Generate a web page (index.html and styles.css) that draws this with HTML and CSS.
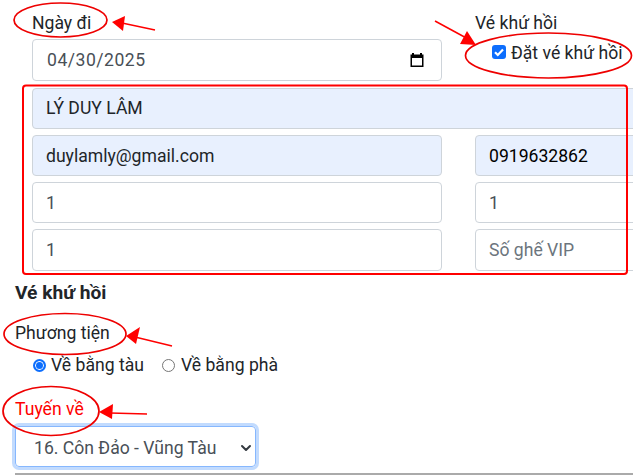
FILE: index.html
```html
<!DOCTYPE html>
<html lang="en">
<head>
    <meta charset="UTF-8">
    <meta name="viewport" content="width=device-width, initial-scale=1.0">
    <title>Đặt vé</title>
    <link rel="stylesheet" href="styles.css">
</head>
<body>

<div class="page">
    <div class="form-grid top-row">
        <div>
            <label class="field-label">Ngày đi</label>
            <div class="input-box">
                <span class="date-text">04/30/2025</span>
                <svg class="calendar" viewBox="0 0 16 16" width="16" height="16">
                    <path d="M3 1h2v1.500h6V1h2v1.500h1.500V15h-13V2.500H3zM3 6v7.500h10V6z" fill="#000" fill-rule="evenodd"/>
                </svg>
            </div>
        </div>
        <div>
            <label class="field-label">Vé khứ hồi</label>
            <div class="check-row">
                <span class="checkbox">
                    <svg viewBox="0 0 14 14" width="14" height="14">
                        <path d="M3 7.200l2.800 2.800L11 4.500" fill="none" stroke="#fff" stroke-width="2.200"/>
                    </svg>
                </span>
                <span class="check-text">Đặt vé khứ hồi</span>
            </div>
        </div>
    </div>

    <div class="input-box autofill full-row name-row">LÝ DUY LÂM</div>

    <div class="form-grid rows">
        <div class="input-box autofill">duylamly@gmail.com</div>
        <div class="input-box autofill dark">0919632862</div>
        <div class="input-box">1</div>
        <div class="input-box">1</div>
        <div class="input-box tall">1</div>
        <div class="input-box tall placeholder">Số ghế VIP</div>
    </div>

    <div class="return-section">
        <h4 class="section-title">Vé khứ hồi</h4>
        <label class="field-label">Phương tiện</label>
        <div class="radio-row">
            <span class="radio-item"><span class="radio checked"></span>Về bằng tàu</span>
            <span class="radio-item"><span class="radio"></span>Về bằng phà</span>
        </div>
        <label class="field-label red">Tuyến về</label>
        <div class="select-box">
            <span>16. Côn Đảo - Vũng Tàu</span>
            <svg viewBox="0 0 12 12" width="12" height="12">
                <path d="M2 4l4 4 4-4" fill="none" stroke="#343a40" stroke-width="2" stroke-linecap="round" stroke-linejoin="round"/>
            </svg>
        </div>
        <div class="bottom-line"></div>
    </div>
</div>

<!-- red notes drawn on top of the screenshot -->
<svg class="notes" viewBox="0 0 633 475" width="633" height="475">
    <g fill="none" stroke="#ee0000" stroke-width="1.700">
        <ellipse cx="60.500" cy="20" rx="46.500" ry="17"/>
        <ellipse cx="548.500" cy="55.500" rx="83" ry="22.500"/>
        <ellipse cx="65" cy="334" rx="61" ry="20.500"/>
        <ellipse cx="51" cy="411" rx="48" ry="24.500"/>
    </g>
    <rect x="23" y="85.500" width="604" height="188.500" rx="3" fill="none" stroke="#f00" stroke-width="2"/>
    <g stroke="#f00" stroke-width="1.500" fill="#f00">
        <line x1="155" y1="30" x2="122" y2="23"/>
        <line x1="435" y1="21" x2="470" y2="40"/>
        <line x1="172" y1="346" x2="135" y2="337"/>
        <line x1="147" y1="414" x2="110" y2="413"/>
    </g>
    <g fill="#f00">
        <polygon points="112,22 125,16 123,31"/>
        <polygon points="476,45 460,44 467,31"/>
        <polygon points="126,336 140,327 136,344"/>
        <polygon points="99,412 113,404 112,419"/>
    </g>
</svg>

</body>
</html>
```

FILE: styles.css
```css
* {
    margin: 0;
    padding: 0;
    box-sizing: border-box;
    font-family: Roboto, Arial, sans-serif;
}

body {
    background-color: #fff;
    color: #212529;
    font-size: 17.600px;
    line-height: 24px;
    overflow: hidden;
    height: 475px;
}

.page {
    position: relative;
    width: 633px;
    height: 475px;
    overflow: hidden;
    padding-top: 11px;
}

.form-grid {
    display: grid;
    grid-template-columns: 410px 300px;
    column-gap: 33px;
    margin-left: 32px;
}

.field-label {
    display: block;
    margin-bottom: 4px;
}

.input-box {
    display: flex;
    align-items: center;
    justify-content: space-between;
    height: 41px;
    padding: 0 13px;
    border: 1px solid #ced4da;
    border-radius: 4px;
    background-color: #fff;
    color: #495057;
}

.top-row .input-box {
    height: 42px;
    padding-right: 16px;
}

.date-text {
    margin-left: 1px;
    letter-spacing: 0.500px;
}

.calendar {
    flex-shrink: 0;
}

.autofill {
    background-color: #e8f0fe;
    color: #212529;
}

.dark {
    color: #000;
}

.full-row {
    width: 700px;
    margin-left: 32px;
}

.name-row {
    margin-top: 7px;
    padding-bottom: 2px;
}

.rows {
    margin-top: 6px;
    row-gap: 6px;
}

.tall {
    height: 42px;
}

.placeholder {
    color: #6c757d;
}

.check-row {
    display: flex;
    align-items: center;
    height: 24px;
    margin-top: 5px;
    padding-left: 17px;
}

.check-text {
    padding-top: 2px;
}

.checkbox {
    display: flex;
    width: 14px;
    height: 14px;
    margin-right: 5px;
    border-radius: 3px;
    background-color: #0d6efd;
}

.return-section {
    padding-left: 15px;
    margin-top: 10px;
}

.section-title {
    font-size: 19.200px;
    font-weight: 700;
    line-height: 24px;
    margin-bottom: 16px;
}

.return-section .field-label {
    margin-bottom: 8px;
}

.field-label.red {
    color: #f00;
    margin-bottom: 5px;
}

.radio-row {
    display: flex;
    gap: 18px;
    padding-left: 18px;
    margin-bottom: 20px;
}

.radio-item {
    display: flex;
    align-items: center;
}

.radio {
    width: 13px;
    height: 13px;
    margin-right: 5px;
    border: 1px solid #767676;
    border-radius: 50%;
    background-color: #fff;
}

.radio-item + .radio-item .radio {
    margin-right: 6px;
}

.radio.checked {
    border: 2px solid #0d6efd;
    box-shadow: inset 0 0 0 1px #fff;
    background-color: #0d6efd;
}

.select-box {
    display: flex;
    align-items: center;
    justify-content: space-between;
    width: 241px;
    height: 41px;
    padding: 2px 3px 0 18px;
    border: 1px solid #86b7fe;
    border-radius: 4px;
    box-shadow: 0 0 0 3px rgba(13, 110, 253, 0.25);
    color: #495057;
}

.bottom-line {
    height: 2px;
    margin-top: 6px;
    background-color: #aaa;
}

.notes {
    position: absolute;
    top: 0;
    left: 0;
}
```
